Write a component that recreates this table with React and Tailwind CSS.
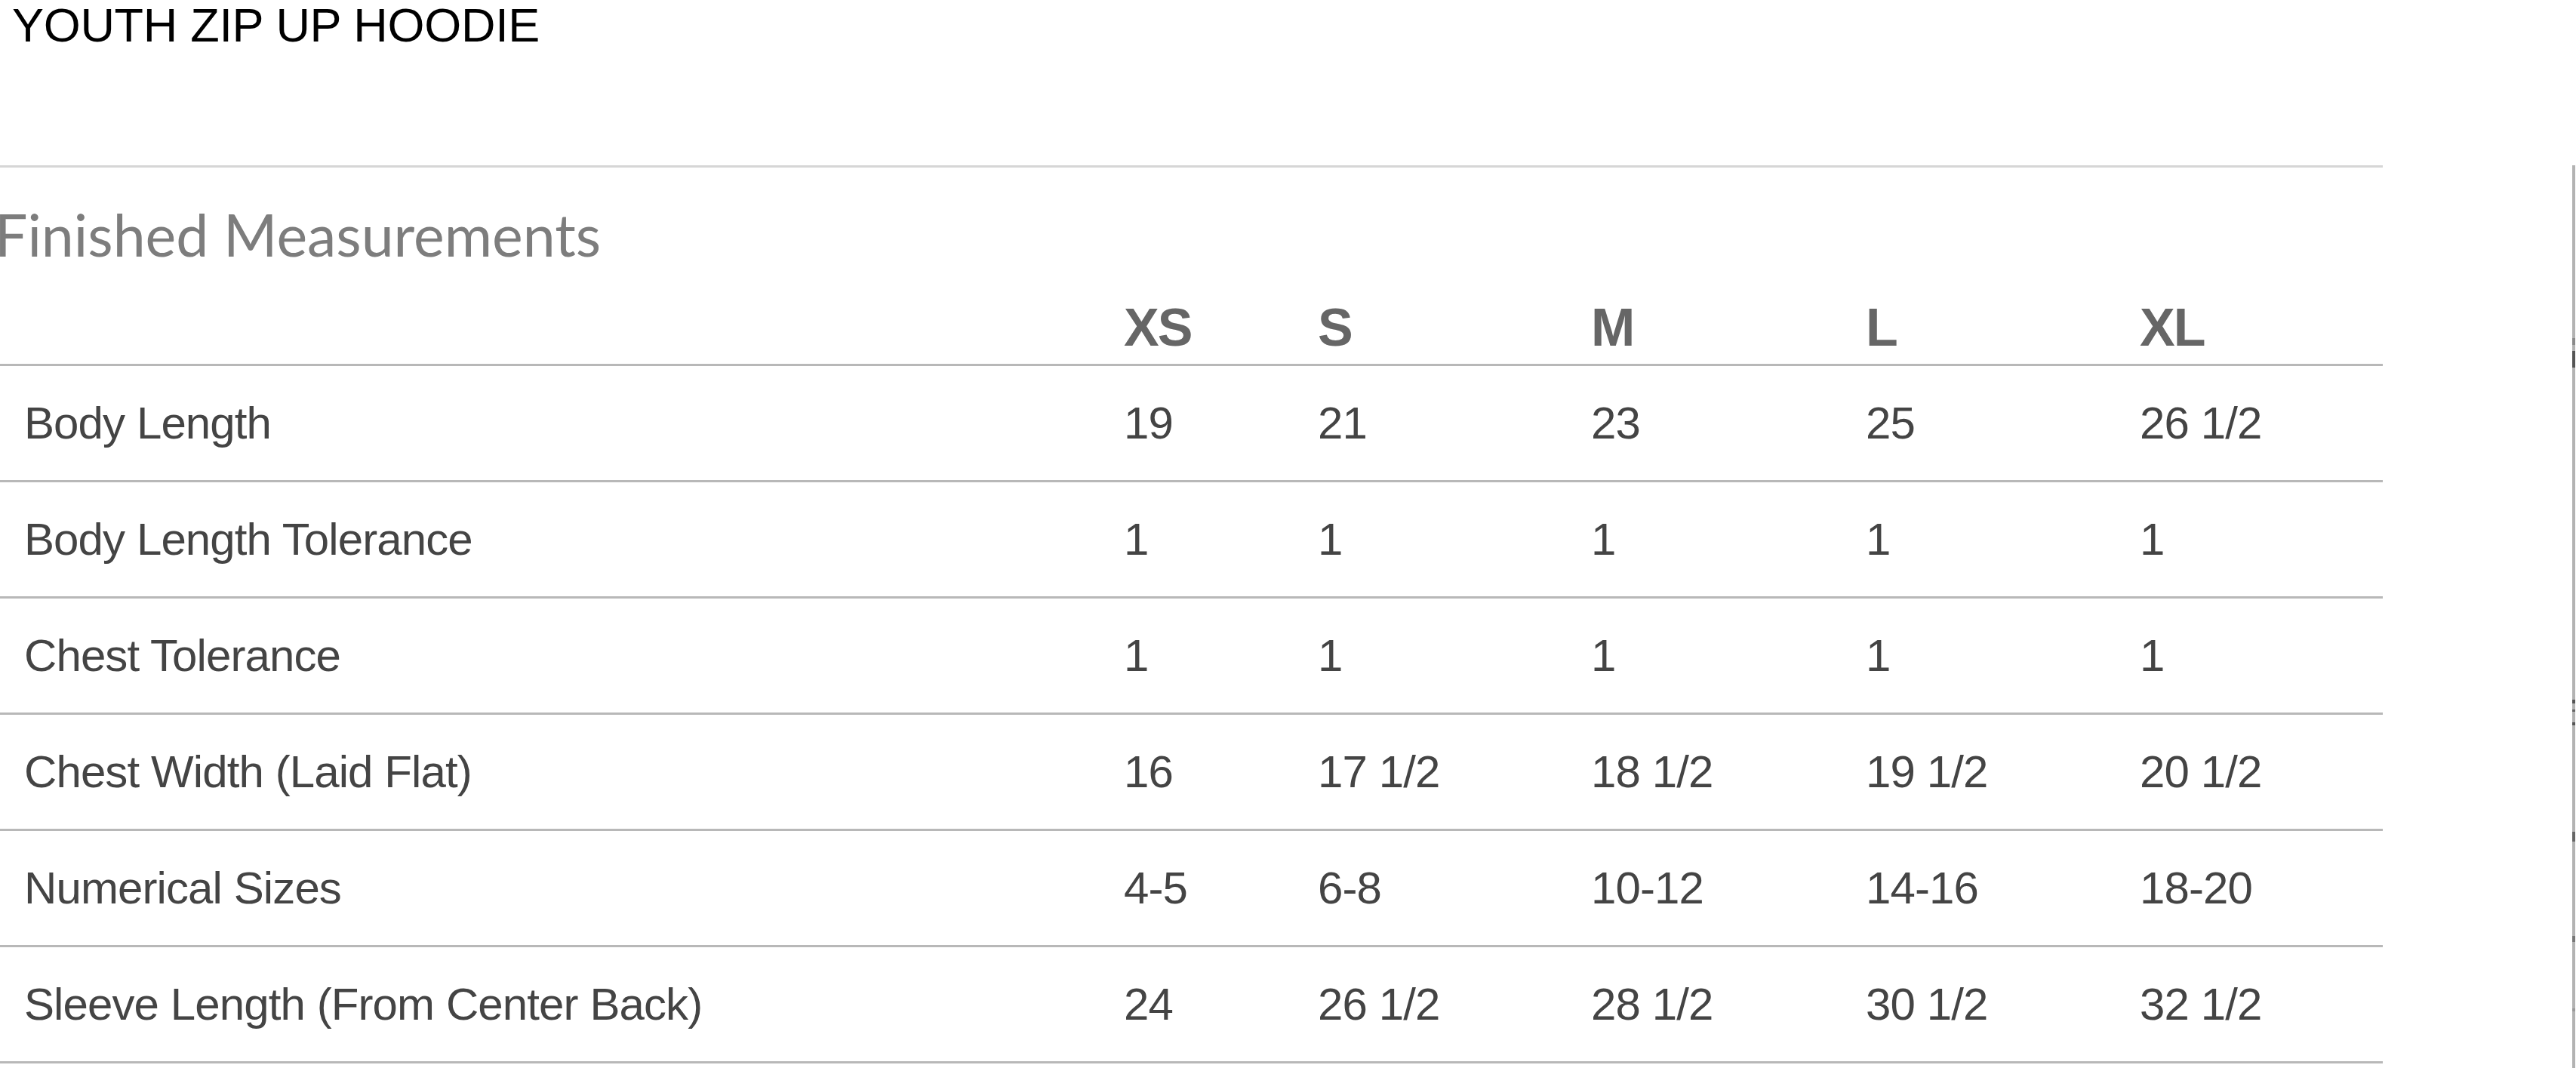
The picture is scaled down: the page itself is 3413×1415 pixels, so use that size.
import React from "react";

const rows = [
  ["Body Length", "19", "21", "23", "25", "26 1/2"],
  ["Body Length Tolerance", "1", "1", "1", "1", "1"],
  ["Chest Tolerance", "1", "1", "1", "1", "1"],
  ["Chest Width (Laid Flat)", "16", "17 1/2", "18 1/2", "19 1/2", "20 1/2"],
  ["Numerical Sizes", "4-5", "6-8", "10-12", "14-16", "18-20"],
  ["Sleeve Length (From Center Back)", "24", "26 1/2", "28 1/2", "30 1/2", "32 1/2"],
];

const sizes = ["XS", "S", "M", "L", "XL"];

const grid = "grid grid-cols-[1489px_257px_362px_364px_363px_322px]";

const ticks = [
  { top: 229, h: 9, c: "bg-[#8a8a8a]" },
  { top: 246, h: 22, c: "bg-[#555555]" },
  { top: 708, h: 5, c: "bg-[#555555]" },
  { top: 721, h: 3, c: "bg-[#666666]" },
  { top: 738, h: 4, c: "bg-[#555555]" },
  { top: 883, h: 13, c: "bg-[#666666]" },
  { top: 1021, h: 8, c: "bg-[#777777]" },
  { top: 1117, h: 4, c: "bg-[#999999]" },
];

export default function App() {
  return (
    <div className="w-[3413px] h-[1415px] bg-white overflow-hidden flex flex-col">
      <div
        className="pl-[16px] pt-[2px] h-[219px] text-[63px] leading-none text-black tracking-[-0.3px]"
        style={{ fontFamily: '"Liberation Sans", Arial, sans-serif' }}
      >
        YOUTH ZIP UP HOODIE
      </div>
      <div className="flex flex-row h-[1196px]">
        <div
          className="w-[3157px] flex flex-col border-t-[3px] border-[#d6d6d6]"
          style={{ fontFamily: '"Liberation Sans", Arial, sans-serif' }}
        >
          <div className="h-[263px] flex flex-col border-b-[3px] border-[#b8b8b8]">
            <div
              className="mt-[50px] -ml-[7px] text-[77px] leading-none text-[#7d7d7d]"
              style={{ fontFamily: 'Lato, "Open Sans", sans-serif' }}
            >
              Finished Measurements
            </div>
            <div className={`${grid} mt-[50px]`}>
              <div></div>
              {sizes.map((s) => (
                <div
                  key={s}
                  className="text-[70px] leading-none font-bold text-[#666666] tracking-[-2px]"
                >
                  {s}
                </div>
              ))}
            </div>
          </div>
          {rows.map((r) => (
            <div
              key={r[0]}
              className={`${grid} h-[154px] items-center border-b-[3px] border-[#b8b8b8]`}
            >
              {r.map((cell, i) => (
                <div
                  key={i}
                  className={`text-[60px] leading-none text-[#444444] tracking-[-0.9px] whitespace-nowrap ${
                    i === 0 ? "pl-[32px]" : ""
                  }`}
                >
                  {cell}
                </div>
              ))}
            </div>
          ))}
        </div>
        <div className="flex-1"></div>
        <div className="w-[4px] mr-[1px] bg-[#b3b3b3] relative">
          {ticks.map((t, i) => (
            <div
              key={i}
              className={`absolute left-0 w-[4px] ${t.c}`}
              style={{ top: t.top, height: t.h }}
            ></div>
          ))}
        </div>
      </div>
    </div>
  );
}
